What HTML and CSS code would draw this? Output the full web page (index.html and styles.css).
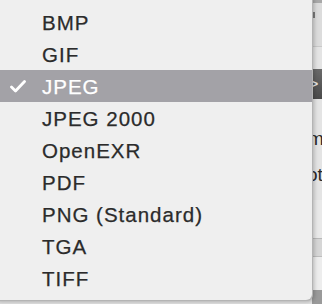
FILE: index.html
```html
<!DOCTYPE html>
<html lang="en">
<head>
    <meta charset="UTF-8">
    <meta name="viewport" content="width=device-width, initial-scale=1.0">
    <title>Format menu</title>
    <link rel="stylesheet" href="styles.css">
</head>
<body>
    <div class="window">
        <div class="strip">
            <div class="strip-top"><span class="tick"></span></div>
            <div class="strip-rule"></div>
            <div class="strip-popup"><span class="chev">&gt;</span></div>
            <div class="strip-text first">m</div>
            <div class="strip-text">ot</div>
            <div class="strip-field"></div>
            <div class="strip-band"></div>
            <div class="strip-rest"></div>
        </div>

        <ul class="menu">
            <li>BMP</li>
            <li>GIF</li>
            <li class="selected">
                <svg class="check" width="16" height="13" viewBox="0 0 16 13">
                    <path d="M1.5 7 L5.5 11 L14.5 1.5" fill="none" stroke="#fff" stroke-width="2.8" stroke-linecap="round" stroke-linejoin="round"/>
                </svg>
                JPEG
            </li>
            <li>JPEG 2000</li>
            <li>OpenEXR</li>
            <li>PDF</li>
            <li>PNG (Standard)</li>
            <li>TGA</li>
            <li>TIFF</li>
        </ul>
    </div>
</body>
</html>
```

FILE: styles.css
```css
html, body {
    margin: 0;
    padding: 0;
}
body {
    width: 322px;
    height: 304px;
    overflow: hidden;
    background-color: #e6e6e6;
    font-family: "Liberation Sans", Arial, sans-serif;
}
.window {
    position: relative;
    width: 322px;
    height: 304px;
    display: flex;
    justify-content: flex-end;
}

/* sliver of the window behind the menu */
.strip {
    width: 10px;
    height: 304px;
    display: flex;
    flex-direction: column;
    background-color: #e4e4e4;
    overflow: hidden;
}
.strip-top {
    height: 46px;
    background: linear-gradient(#a9a9a9 0, #a9a9a9 3px, #dcdcdc 3px);
    position: relative;
}
.tick {
    position: absolute;
    left: 1px;
    top: 12px;
    width: 2px;
    height: 6px;
    background-color: #7a7a7a;
}
.strip-rule {
    height: 1px;
    background-color: #c9c9c9;
    margin-bottom: 22px;
}
.strip-popup {
    height: 30px;
    background: linear-gradient(#6a6a6a, #4a4a4a);
    color: #e8e8e8;
    font-size: 18px;
    line-height: 30px;
    margin-bottom: 30px;
}
.chev {
    margin-left: -4px;
}
.strip-text {
    height: 20px;
    font-size: 19px;
    line-height: 20px;
    color: #2a2a2a;
    margin-left: -5px;
    margin-bottom: 15px;
}
.strip-text.first {
    margin-left: -4px;
    margin-bottom: 16px;
}
.strip-field {
    height: 38px;
    background-color: #e9e9e9;
    border-bottom: 1px solid #b9b9b9;
}
.strip-band {
    height: 17px;
    background-color: #d6d6d6;
    border-bottom: 1px solid #bdbdbd;
}
.strip-rest {
    flex: 1;
    background: linear-gradient(#ededed 0, #ededed 33px, #9a9a9a 33px);
}

/* the popup menu itself */
.menu {
    position: absolute;
    left: -8px;
    top: -6px;
    width: 320px;
    margin: 0;
    padding: 12px 0 6px 0;
    list-style-type: none;
    background-color: #efefef;
    border-radius: 6px;
    box-shadow: 1px 1px 0 #b4b4b4, 2px 2px 4px rgba(0, 0, 0, 0.25);
}
.menu li {
    position: relative;
    height: 32px;
    line-height: 34px;
    padding-left: 50px;
    font-size: 20.5px;
    letter-spacing: 1px;
    color: #2b2b2b;
    -webkit-text-stroke: 0.25px #2b2b2b;
}
.menu li.selected {
    background-color: #a3a2a7;
    color: #ffffff;
    -webkit-text-stroke: 0.25px #ffffff;
}
.check {
    position: absolute;
    left: 18px;
    top: 10px;
}
```
